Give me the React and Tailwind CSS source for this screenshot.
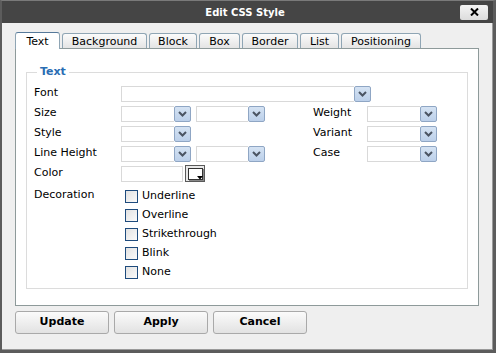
import { useState } from "react";

const font = { fontFamily: "'DejaVu Sans', Verdana, sans-serif" };

const tabs = [
  { name: "Text", w: "w-[45px]" },
  { name: "Background", w: "w-[85px]" },
  { name: "Block", w: "w-[48px]" },
  { name: "Box", w: "w-[41px]" },
  { name: "Border", w: "w-[56px]" },
  { name: "List", w: "w-[39px]" },
  { name: "Positioning", w: "w-[80px]" },
];

function Chevron() {
  return (
    <svg width="9" height="6" viewBox="0 0 9 6">
      <path d="M1 1 L4.5 4.5 L8 1" fill="none" stroke="#4b5563" strokeWidth="2" />
    </svg>
  );
}

function Select({ w }) {
  return (
    <div className={`flex h-[16px] ${w} bg-white`}>
      <div className="flex-1 border border-r-0 border-[#d9d9d9]" />
      <div className="flex w-[17px] items-center justify-center rounded-[2px] border border-[#8fa6c4] bg-gradient-to-b from-[#d5e3f3] to-[#bcd0ea]">
        <Chevron />
      </div>
    </div>
  );
}

function Label({ children, w = "w-[87px]" }) {
  return <div className={`${w} text-[11px] text-black`}>{children}</div>;
}

function Checkbox({ label }) {
  const [on, setOn] = useState(false);
  return (
    <label className="flex h-[19px] items-center gap-[4px] text-[11px] text-black">
      <span
        onClick={() => setOn(!on)}
        className="h-[13px] w-[13px] border border-[#1e4b7d] bg-gradient-to-br from-[#e2e2e2] to-[#fafafa]"
      />
      {label}
    </label>
  );
}

function Button({ children, w }) {
  return (
    <button
      className={`${w} h-[23px] rounded-[3px] border border-[#a9a9a9] bg-gradient-to-b from-[#fbfbfb] to-[#e2e2e2] text-[11px] font-bold text-black`}
    >
      {children}
    </button>
  );
}

export default function App() {
  const [active, setActive] = useState("Text");

  return (
    <div
      className="flex h-[353px] w-[496px] flex-col border-t border-l-2 border-r-[3px] border-b-[3px] border-t-[#7a7a7a] border-l-[#5c5c5c] border-r-[#5c5c5c] border-b-[#5c5c5c] bg-[#5c5c5c]"
      style={font}
    >
      {/* Title bar */}
      <div className="grid h-[22px] grid-cols-[1fr_auto_1fr] items-center bg-[#454545] pr-[5px]">
        <div />
        <div className="text-[10px] font-bold text-white">Edit CSS Style</div>
        <div className="flex justify-end">
          <button className="flex h-[15px] w-[28px] items-center justify-center rounded-[2px] bg-gradient-to-b from-[#f4f4f4] to-[#dcdcdc]">
            <svg width="9" height="8" viewBox="0 0 9 8">
              <path d="M1 0.5 L8 7.5 M8 0.5 L1 7.5" stroke="#000" strokeWidth="2" />
            </svg>
          </button>
        </div>
      </div>

      {/* Body */}
      <div className="flex flex-1 flex-col border-r border-b border-[#9a9a9a] bg-[#efefef] pt-[9px] pl-[13px]">
        {/* Tabs */}
        <div className="flex h-[16px] items-end gap-[2px]">
          {tabs.map((t) =>
            t.name === active ? (
              <div
                key={t.name}
                onClick={() => setActive(t.name)}
                className={`${t.w} relative z-10 -mb-px flex h-[17px] items-center justify-center rounded-t-[3px] border border-b-0 border-[#8fa5b4] border-t-[#56799a] bg-white pt-[2px] text-[11px] text-black`}
              >
                {t.name}
              </div>
            ) : (
              <div
                key={t.name}
                onClick={() => setActive(t.name)}
                className={`${t.w} flex h-[15px] items-center justify-center rounded-t-[3px] border border-b-0 border-[#8fa5b4] bg-gradient-to-b from-[#fbfbfb] to-[#e4e4e4] pt-[2px] text-[11px] text-black`}
              >
                {t.name}
              </div>
            )
          )}
        </div>

        {/* Panel */}
        <div className="h-[258px] w-[464px] border border-[#8e9a9a] bg-white px-[10px] pt-[15px]">
          <fieldset className="h-[225px] w-[442px] border border-[#dcdcdc] pl-[7px]">
            <legend className="ml-[3px] px-[3px] text-[11px] font-bold text-[#2a6db3]">Text</legend>

            <div className="flex flex-col pt-[3px]">
              <div className="flex h-[20px] items-center">
                <Label>Font</Label>
                <Select w="w-[250px]" />
              </div>
              <div className="flex h-[20px] items-center">
                <Label>Size</Label>
                <Select w="w-[70px]" />
                <div className="w-[5px]" />
                <Select w="w-[69px]" />
                <div className="w-[48px]" />
                <Label w="w-[54px]">Weight</Label>
                <Select w="w-[70px]" />
              </div>
              <div className="flex h-[20px] items-center">
                <Label>Style</Label>
                <Select w="w-[70px]" />
                <div className="w-[122px]" />
                <Label w="w-[54px]">Variant</Label>
                <Select w="w-[70px]" />
              </div>
              <div className="flex h-[20px] items-center">
                <Label>Line Height</Label>
                <Select w="w-[70px]" />
                <div className="w-[5px]" />
                <Select w="w-[69px]" />
                <div className="w-[48px]" />
                <Label w="w-[54px]">Case</Label>
                <Select w="w-[70px]" />
              </div>
              <div className="flex h-[20px] items-center">
                <Label>Color</Label>
                <div className="h-[16px] w-[62px] border border-[#d9d9d9] bg-white" />
                <div className="ml-[2px] flex h-[17px] w-[20px] items-center justify-center border border-[#5a5a5a] bg-[#e8e8e8]">
                  <div className="relative h-[12px] w-[15px] border border-[#333] bg-white shadow-[1px_1px_0_#888]">
                    <svg className="absolute -right-px -bottom-px" width="6" height="4" viewBox="0 0 6 4">
                      <path d="M0 0 H6 L3 3.5 Z" fill="#000" />
                    </svg>
                  </div>
                </div>
              </div>
              <div className="flex pt-[3px]">
                <div className="w-[91px] text-[11px] text-black">Decoration</div>
                <div className="flex flex-col">
                  <Checkbox label="Underline" />
                  <Checkbox label="Overline" />
                  <Checkbox label="Strikethrough" />
                  <Checkbox label="Blink" />
                  <Checkbox label="None" />
                </div>
              </div>
            </div>
          </fieldset>
        </div>

        {/* Buttons */}
        <div className="mt-[5px] flex gap-[5px]">
          <Button w="w-[94px]">Update</Button>
          <Button w="w-[94px]">Apply</Button>
          <Button w="w-[94px]">Cancel</Button>
        </div>
      </div>
    </div>
  );
}
